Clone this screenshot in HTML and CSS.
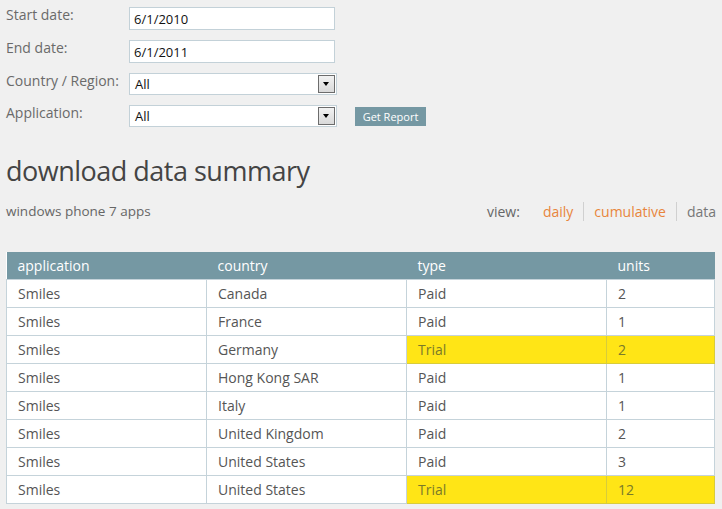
FILE: index.html
```html
<!DOCTYPE html>
<html>
<head>
<meta charset="utf-8">
<link rel="stylesheet" href="styles.css">
</head>
<body>
<form class="filters">
  <label class="lbl">Start date:</label>
  <div class="field"><input class="txt" type="text" value="6/1/2010"></div>
  <label class="lbl">End date:</label>
  <div class="field"><input class="txt" type="text" value="6/1/2011"></div>
  <label class="lbl">Country / Region:</label>
  <div class="field"><div class="sel"><span class="sel-val">All</span><span class="arrow"></span></div></div>
  <label class="lbl">Application:</label>
  <div class="field"><div class="sel"><span class="sel-val">All</span><span class="arrow"></span></div><button type="button" class="btn">Get Report</button></div>
</form>

<h1 class="title">download data summary</h1>
<div class="subbar">
  <span class="sub">windows phone 7 apps</span>
  <nav class="views">
    <span class="view-lbl">view:</span>
    <a class="vlink">daily</a>
    <span class="sep"></span>
    <a class="vlink">cumulative</a>
    <span class="sep"></span>
    <span class="vcur">data</span>
  </nav>
</div>

<table class="grid">
  <thead>
    <tr><th class="c1">application</th><th class="c2">country</th><th class="c3">type</th><th class="c4">units</th></tr>
  </thead>
  <tbody>
    <tr><td>Smiles</td><td>Canada</td><td>Paid</td><td>2</td></tr>
    <tr><td>Smiles</td><td>France</td><td>Paid</td><td>1</td></tr>
    <tr><td>Smiles</td><td>Germany</td><td class="hl">Trial</td><td class="hl">2</td></tr>
    <tr><td>Smiles</td><td>Hong Kong SAR</td><td>Paid</td><td>1</td></tr>
    <tr><td>Smiles</td><td>Italy</td><td>Paid</td><td>1</td></tr>
    <tr><td>Smiles</td><td>United Kingdom</td><td>Paid</td><td>2</td></tr>
    <tr><td>Smiles</td><td>United States</td><td>Paid</td><td>3</td></tr>
    <tr><td>Smiles</td><td>United States</td><td class="hl">Trial</td><td class="hl">12</td></tr>
  </tbody>
</table>
</body>
</html>
```

FILE: styles.css
```css
html, body {
  margin: 0;
  padding: 0;
  background: #f0f0f0;
}
body {
  font-family: "Open Sans", "Noto Sans", sans-serif;
  font-size: 14px;
  color: #666;
  padding: 0 0 0 6px;
}
.filters {
  display: grid;
  grid-template-columns: 123px auto;
  row-gap: 10px;
  padding-top: 7px;
  align-items: start;
}
.lbl {
  font-size: 14px;
  color: #6a6a6a;
  line-height: 18px;
  margin-top: -1px;
}
.field {
  display: flex;
  align-items: center;
}
.txt {
  box-sizing: border-box;
  width: 206px;
  height: 23px;
  margin: 0;
  border: 1px solid #c3d1d8;
  background: #fff;
  padding: 0 4px;
  font-family: "Open Sans", sans-serif;
  font-size: 13px;
  color: #111;
  outline: none;
}
.sel {
  box-sizing: border-box;
  width: 208px;
  height: 22px;
  border: 1px solid #c3d1d8;
  background: #fff;
  display: flex;
  align-items: center;
  justify-content: space-between;
  padding: 0 1px 0 5px;
  font-size: 13px;
  color: #111;
}
.arrow {
  box-sizing: border-box;
  width: 17px;
  height: 18px;
  border: 1px solid #6c6c6c;
  background: linear-gradient(#f2f2f2, #d9d9d9);
  position: relative;
}
.arrow::after {
  content: "";
  position: absolute;
  left: 4px;
  top: 6px;
  border-left: 3.5px solid transparent;
  border-right: 3.5px solid transparent;
  border-top: 4px solid #000;
}
.btn {
  margin-left: 18px;
  width: 71px;
  height: 19px;
  border: none;
  background: #7598a3;
  color: #fff;
  font-family: "Open Sans", sans-serif;
  font-size: 11px;
  padding: 0;
  line-height: 19px;
}
.title {
  margin: 26px 0 0 0;
  font-weight: normal;
  font-size: 27px;
  line-height: 36px;
  color: #444;
  letter-spacing: -0.5px;
}
.subbar {
  display: flex;
  justify-content: space-between;
  align-items: center;
  margin-top: 12px;
  height: 20px;
}
.sub {
  font-size: 13.5px;
  color: #666;
}
.views {
  display: flex;
  align-items: center;
  font-size: 14px;
}
.view-lbl {
  color: #666;
  margin-right: 23px;
}
.vlink {
  color: #e8853c;
}
.sep {
  width: 1px;
  height: 19px;
  background: #d0d0d0;
  margin: 0 10px;
}
.vcur {
  color: #777;
  margin-right: 6px;
}
.grid {
  margin-top: 31px;
  border-collapse: collapse;
  width: 709px;
  background: #fff;
}
.grid th {
  background: #7598a3;
  color: #fff;
  font-weight: normal;
  text-align: left;
  height: 27px;
  padding: 0 11px;
  font-size: 14px;
}
.grid td {
  border: 1px solid #c5d3da;
  height: 27px;
  padding: 0 11px;
  color: #555;
  font-size: 14px;
}
.grid .c1, .grid .c2, .grid .c3 { width: 178px; }
.grid td.hl {
  background: #ffe516;
  color: #7a7a2a;
  border-color: #d8cc3a;
}
```
